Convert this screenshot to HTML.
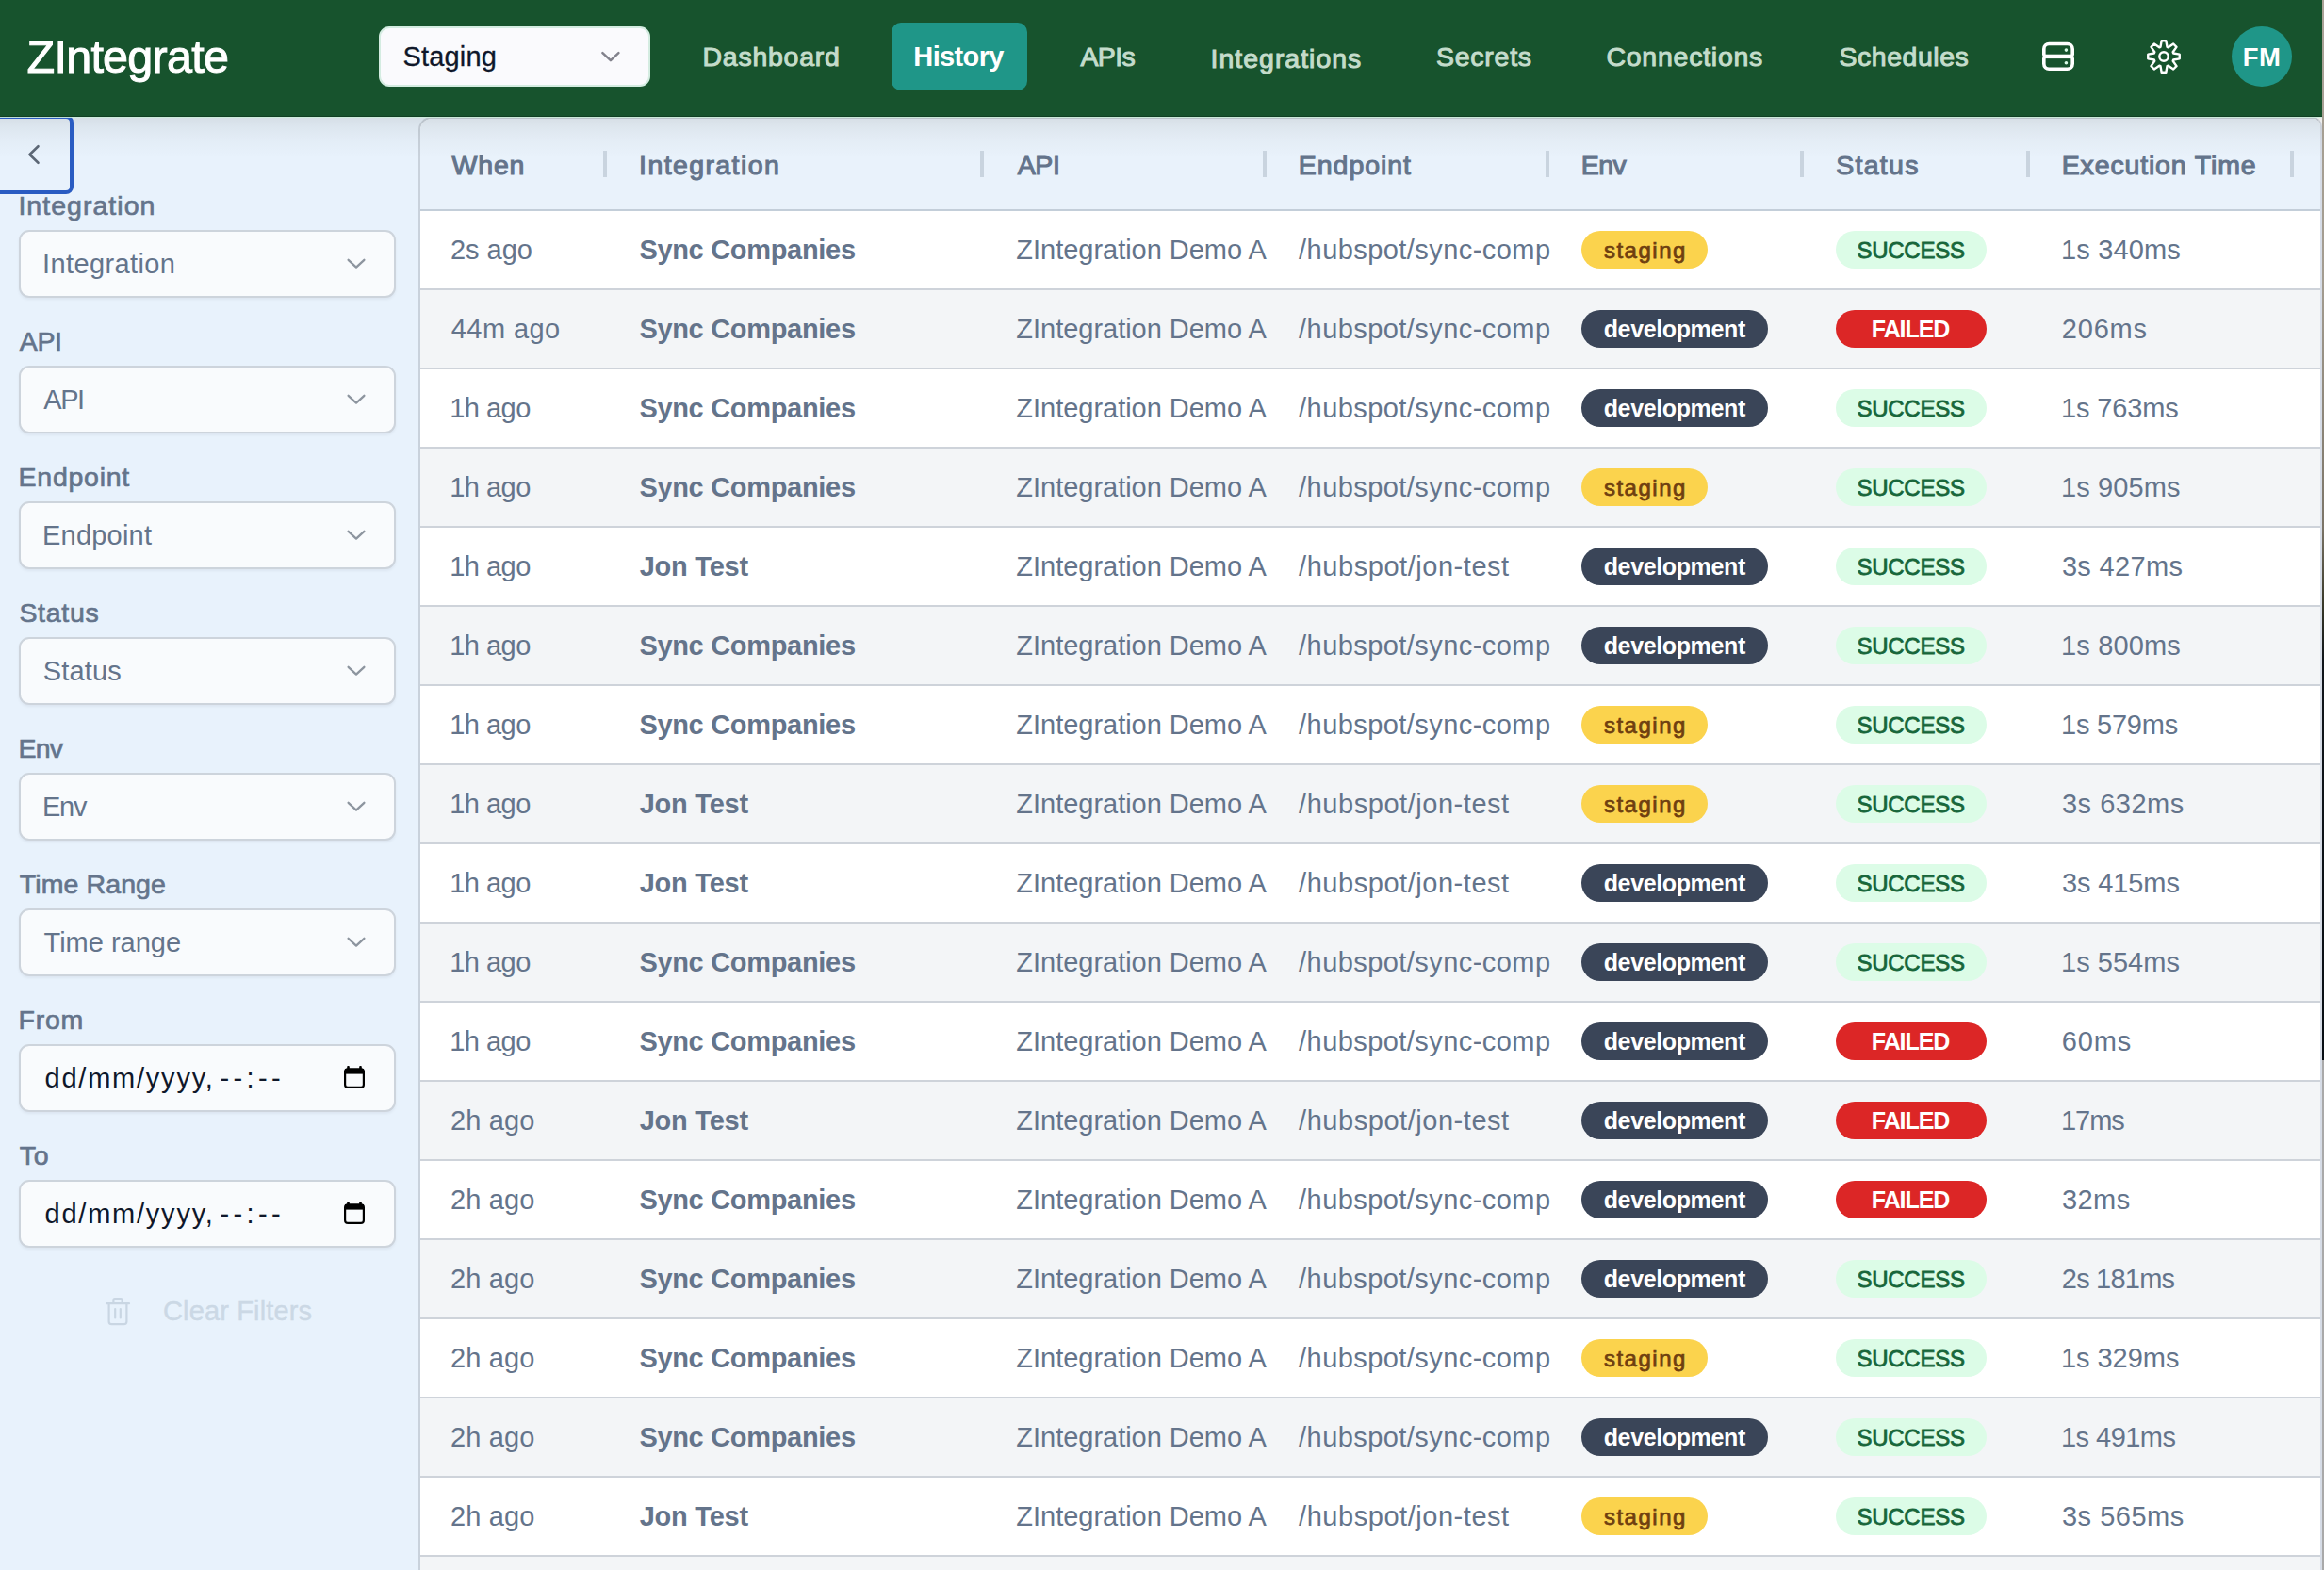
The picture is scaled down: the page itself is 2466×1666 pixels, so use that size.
<!DOCTYPE html>
<html lang="en"><head><meta charset="utf-8"><title>ZIntegrate - History</title><style>
html,body{margin:0;padding:0}
html{width:2466px;height:1666px;overflow:hidden}
body{width:2466px;height:1666px;overflow:hidden;background:#fff;position:relative;font-family:"Liberation Sans", sans-serif}
.a{position:absolute;display:block}
.t{position:absolute;white-space:nowrap;line-height:1;font-weight:400;font-family:"Liberation Sans", sans-serif}
</style></head><body>
<div class="a " style="left:0px;top:124px;width:470px;height:1542px;background:#e8f2fc;"></div>
<main>
<div class="a" style="left:444px;top:124px;width:2020px;height:1542px;border:2px solid #c9d2dc;border-right-color:#d6dce6;border-bottom:0;border-radius:14px 10px 0 0;box-sizing:border-box;overflow:hidden;background:#fff">
<div class="a" style="left:0;top:0;width:2020px;height:96px;background:#e9f2fb;border-bottom:2px solid #c3ced9"></div>
<div class="a" style="left:0;top:98px;width:2020px;height:82px;background:#fff;border-bottom:2px solid #ced3da"></div>
<div class="a" style="left:0;top:182px;width:2020px;height:82px;background:#f3f5f7;border-bottom:2px solid #ced3da"></div>
<div class="a" style="left:0;top:266px;width:2020px;height:82px;background:#fff;border-bottom:2px solid #ced3da"></div>
<div class="a" style="left:0;top:350px;width:2020px;height:82px;background:#f3f5f7;border-bottom:2px solid #ced3da"></div>
<div class="a" style="left:0;top:434px;width:2020px;height:82px;background:#fff;border-bottom:2px solid #ced3da"></div>
<div class="a" style="left:0;top:518px;width:2020px;height:82px;background:#f3f5f7;border-bottom:2px solid #ced3da"></div>
<div class="a" style="left:0;top:602px;width:2020px;height:82px;background:#fff;border-bottom:2px solid #ced3da"></div>
<div class="a" style="left:0;top:686px;width:2020px;height:82px;background:#f3f5f7;border-bottom:2px solid #ced3da"></div>
<div class="a" style="left:0;top:770px;width:2020px;height:82px;background:#fff;border-bottom:2px solid #ced3da"></div>
<div class="a" style="left:0;top:854px;width:2020px;height:82px;background:#f3f5f7;border-bottom:2px solid #ced3da"></div>
<div class="a" style="left:0;top:938px;width:2020px;height:82px;background:#fff;border-bottom:2px solid #ced3da"></div>
<div class="a" style="left:0;top:1022px;width:2020px;height:82px;background:#f3f5f7;border-bottom:2px solid #ced3da"></div>
<div class="a" style="left:0;top:1106px;width:2020px;height:82px;background:#fff;border-bottom:2px solid #ced3da"></div>
<div class="a" style="left:0;top:1190px;width:2020px;height:82px;background:#f3f5f7;border-bottom:2px solid #ced3da"></div>
<div class="a" style="left:0;top:1274px;width:2020px;height:82px;background:#fff;border-bottom:2px solid #ced3da"></div>
<div class="a" style="left:0;top:1358px;width:2020px;height:82px;background:#f3f5f7;border-bottom:2px solid #ced3da"></div>
<div class="a" style="left:0;top:1442px;width:2020px;height:82px;background:#fff;border-bottom:2px solid #ced3da"></div>
<div class="a" style="left:0;top:1526px;width:2020px;height:82px;background:#f3f5f7;border-bottom:2px solid #ced3da"></div>
</div>
<div class="a " style="left:0px;top:124px;width:2464px;height:44px;background:linear-gradient(to bottom,rgba(15,15,0,.088),rgba(15,15,0,.05) 25%,rgba(15,15,0,.022) 55%,rgba(15,15,0,0));pointer-events:none;"></div>
<div class="a " style="left:640px;top:160px;width:4px;height:28px;background:#c9d4df;"></div>
<div class="a " style="left:1040px;top:160px;width:4px;height:28px;background:#c9d4df;"></div>
<div class="a " style="left:1340px;top:160px;width:4px;height:28px;background:#c9d4df;"></div>
<div class="a " style="left:1640px;top:160px;width:4px;height:28px;background:#c9d4df;"></div>
<div class="a " style="left:1910px;top:160px;width:4px;height:28px;background:#c9d4df;"></div>
<div class="a " style="left:2150px;top:160px;width:4px;height:28px;background:#c9d4df;"></div>
<div class="a " style="left:2430px;top:160px;width:4px;height:28px;background:#c9d4df;"></div>
<span class="t" style="left:479.53px;top:161px;font-size:28.5px;color:#64748b;letter-spacing:0.820px;-webkit-text-stroke:1.1px #64748b;">When</span>
<span class="t" style="left:678.09px;top:161px;font-size:28.5px;color:#64748b;letter-spacing:1.399px;-webkit-text-stroke:1.1px #64748b;">Integration</span>
<span class="t" style="left:1079.65px;top:161px;font-size:28.5px;color:#64748b;letter-spacing:-0.377px;-webkit-text-stroke:1.1px #64748b;">API</span>
<span class="t" style="left:1377.84px;top:161px;font-size:28.5px;color:#64748b;letter-spacing:0.957px;-webkit-text-stroke:1.1px #64748b;">Endpoint</span>
<span class="t" style="left:1677.84px;top:161px;font-size:28.5px;color:#64748b;letter-spacing:-0.589px;-webkit-text-stroke:1.1px #64748b;">Env</span>
<span class="t" style="left:1948.24px;top:161px;font-size:28.5px;color:#64748b;letter-spacing:1.283px;-webkit-text-stroke:1.1px #64748b;">Status</span>
<span class="t" style="left:2187.74px;top:161px;font-size:28.5px;color:#64748b;letter-spacing:0.846px;-webkit-text-stroke:1.1px #64748b;">Execution Time</span>
<span class="t" style="left:478.00px;top:251px;font-size:29.0px;color:#64748b;letter-spacing:-0.023px;">2s ago</span>
<span class="t" style="left:678.38px;top:251px;font-size:29.0px;color:#64748b;font-weight:700;letter-spacing:-0.312px;">Sync Companies</span>
<span class="t" style="left:1078.35px;top:251px;font-size:29.0px;color:#64748b;letter-spacing:-0.025px;">ZIntegration Demo A</span>
<span class="t" style="left:1378.07px;top:251px;font-size:29.0px;color:#64748b;letter-spacing:0.439px;">/hubspot/sync-comp</span>
<div class="a " style="left:1678px;top:245px;width:134px;height:40px;background:#fbd34d;border-radius:20px;"></div>
<span class="t" style="left:1701.89px;top:254px;font-size:24.0px;color:#6f3f10;letter-spacing:1.533px;-webkit-text-stroke:0.75px #6f3f10;">staging</span>
<div class="a " style="left:1948px;top:245px;width:160px;height:40px;background:#dcfce7;border-radius:20px;"></div>
<span class="t" style="left:1970.48px;top:254px;font-size:24.0px;color:#17663a;letter-spacing:-0.265px;-webkit-text-stroke:0.8px #17663a;">SUCCESS</span>
<span class="t" style="left:2187.01px;top:251px;font-size:29.0px;color:#64748b;letter-spacing:0.151px;">1s 340ms</span>
<span class="t" style="left:478.82px;top:335px;font-size:29.0px;color:#64748b;letter-spacing:0.415px;">44m ago</span>
<span class="t" style="left:678.38px;top:335px;font-size:29.0px;color:#64748b;font-weight:700;letter-spacing:-0.312px;">Sync Companies</span>
<span class="t" style="left:1078.35px;top:335px;font-size:29.0px;color:#64748b;letter-spacing:-0.025px;">ZIntegration Demo A</span>
<span class="t" style="left:1378.07px;top:335px;font-size:29.0px;color:#64748b;letter-spacing:0.439px;">/hubspot/sync-comp</span>
<div class="a " style="left:1678px;top:329px;width:198px;height:40px;background:#3a4558;border-radius:20px;"></div>
<span class="t" style="left:1701.69px;top:337px;font-size:25.0px;color:#ffffff;font-weight:700;letter-spacing:-0.366px;">development</span>
<div class="a " style="left:1948px;top:329px;width:160px;height:40px;background:#dc2626;border-radius:20px;"></div>
<span class="t" style="left:1985.82px;top:337px;font-size:25.0px;color:#ffffff;font-weight:700;letter-spacing:-1.075px;">FAILED</span>
<span class="t" style="left:2187.80px;top:335px;font-size:29.0px;color:#64748b;letter-spacing:0.789px;">206ms</span>
<span class="t" style="left:477.21px;top:419px;font-size:29.0px;color:#64748b;letter-spacing:-0.514px;">1h ago</span>
<span class="t" style="left:678.38px;top:419px;font-size:29.0px;color:#64748b;font-weight:700;letter-spacing:-0.312px;">Sync Companies</span>
<span class="t" style="left:1078.35px;top:419px;font-size:29.0px;color:#64748b;letter-spacing:-0.025px;">ZIntegration Demo A</span>
<span class="t" style="left:1378.07px;top:419px;font-size:29.0px;color:#64748b;letter-spacing:0.439px;">/hubspot/sync-comp</span>
<div class="a " style="left:1678px;top:413px;width:198px;height:40px;background:#3a4558;border-radius:20px;"></div>
<span class="t" style="left:1701.69px;top:421px;font-size:25.0px;color:#ffffff;font-weight:700;letter-spacing:-0.366px;">development</span>
<div class="a " style="left:1948px;top:413px;width:160px;height:40px;background:#dcfce7;border-radius:20px;"></div>
<span class="t" style="left:1970.48px;top:422px;font-size:24.0px;color:#17663a;letter-spacing:-0.265px;-webkit-text-stroke:0.8px #17663a;">SUCCESS</span>
<span class="t" style="left:2187.01px;top:419px;font-size:29.0px;color:#64748b;letter-spacing:-0.149px;">1s 763ms</span>
<span class="t" style="left:477.21px;top:503px;font-size:29.0px;color:#64748b;letter-spacing:-0.514px;">1h ago</span>
<span class="t" style="left:678.38px;top:503px;font-size:29.0px;color:#64748b;font-weight:700;letter-spacing:-0.312px;">Sync Companies</span>
<span class="t" style="left:1078.35px;top:503px;font-size:29.0px;color:#64748b;letter-spacing:-0.025px;">ZIntegration Demo A</span>
<span class="t" style="left:1378.07px;top:503px;font-size:29.0px;color:#64748b;letter-spacing:0.439px;">/hubspot/sync-comp</span>
<div class="a " style="left:1678px;top:497px;width:134px;height:40px;background:#fbd34d;border-radius:20px;"></div>
<span class="t" style="left:1701.89px;top:506px;font-size:24.0px;color:#6f3f10;letter-spacing:1.533px;-webkit-text-stroke:0.75px #6f3f10;">staging</span>
<div class="a " style="left:1948px;top:497px;width:160px;height:40px;background:#dcfce7;border-radius:20px;"></div>
<span class="t" style="left:1970.48px;top:506px;font-size:24.0px;color:#17663a;letter-spacing:-0.265px;-webkit-text-stroke:0.8px #17663a;">SUCCESS</span>
<span class="t" style="left:2187.01px;top:503px;font-size:29.0px;color:#64748b;letter-spacing:0.094px;">1s 905ms</span>
<span class="t" style="left:477.21px;top:587px;font-size:29.0px;color:#64748b;letter-spacing:-0.514px;">1h ago</span>
<span class="t" style="left:678.64px;top:587px;font-size:29.0px;color:#64748b;font-weight:700;letter-spacing:-0.231px;">Jon Test</span>
<span class="t" style="left:1078.35px;top:587px;font-size:29.0px;color:#64748b;letter-spacing:-0.025px;">ZIntegration Demo A</span>
<span class="t" style="left:1378.07px;top:587px;font-size:29.0px;color:#64748b;letter-spacing:0.543px;">/hubspot/jon-test</span>
<div class="a " style="left:1678px;top:581px;width:198px;height:40px;background:#3a4558;border-radius:20px;"></div>
<span class="t" style="left:1701.69px;top:589px;font-size:25.0px;color:#ffffff;font-weight:700;letter-spacing:-0.366px;">development</span>
<div class="a " style="left:1948px;top:581px;width:160px;height:40px;background:#dcfce7;border-radius:20px;"></div>
<span class="t" style="left:1970.48px;top:590px;font-size:24.0px;color:#17663a;letter-spacing:-0.265px;-webkit-text-stroke:0.8px #17663a;">SUCCESS</span>
<span class="t" style="left:2187.89px;top:587px;font-size:29.0px;color:#64748b;letter-spacing:0.340px;">3s 427ms</span>
<span class="t" style="left:477.21px;top:671px;font-size:29.0px;color:#64748b;letter-spacing:-0.514px;">1h ago</span>
<span class="t" style="left:678.38px;top:671px;font-size:29.0px;color:#64748b;font-weight:700;letter-spacing:-0.312px;">Sync Companies</span>
<span class="t" style="left:1078.35px;top:671px;font-size:29.0px;color:#64748b;letter-spacing:-0.025px;">ZIntegration Demo A</span>
<span class="t" style="left:1378.07px;top:671px;font-size:29.0px;color:#64748b;letter-spacing:0.439px;">/hubspot/sync-comp</span>
<div class="a " style="left:1678px;top:665px;width:198px;height:40px;background:#3a4558;border-radius:20px;"></div>
<span class="t" style="left:1701.69px;top:673px;font-size:25.0px;color:#ffffff;font-weight:700;letter-spacing:-0.366px;">development</span>
<div class="a " style="left:1948px;top:665px;width:160px;height:40px;background:#dcfce7;border-radius:20px;"></div>
<span class="t" style="left:1970.48px;top:674px;font-size:24.0px;color:#17663a;letter-spacing:-0.265px;-webkit-text-stroke:0.8px #17663a;">SUCCESS</span>
<span class="t" style="left:2187.01px;top:671px;font-size:29.0px;color:#64748b;letter-spacing:0.151px;">1s 800ms</span>
<span class="t" style="left:477.21px;top:755px;font-size:29.0px;color:#64748b;letter-spacing:-0.514px;">1h ago</span>
<span class="t" style="left:678.38px;top:755px;font-size:29.0px;color:#64748b;font-weight:700;letter-spacing:-0.312px;">Sync Companies</span>
<span class="t" style="left:1078.35px;top:755px;font-size:29.0px;color:#64748b;letter-spacing:-0.025px;">ZIntegration Demo A</span>
<span class="t" style="left:1378.07px;top:755px;font-size:29.0px;color:#64748b;letter-spacing:0.439px;">/hubspot/sync-comp</span>
<div class="a " style="left:1678px;top:749px;width:134px;height:40px;background:#fbd34d;border-radius:20px;"></div>
<span class="t" style="left:1701.89px;top:758px;font-size:24.0px;color:#6f3f10;letter-spacing:1.533px;-webkit-text-stroke:0.75px #6f3f10;">staging</span>
<div class="a " style="left:1948px;top:749px;width:160px;height:40px;background:#dcfce7;border-radius:20px;"></div>
<span class="t" style="left:1970.48px;top:758px;font-size:24.0px;color:#17663a;letter-spacing:-0.265px;-webkit-text-stroke:0.8px #17663a;">SUCCESS</span>
<span class="t" style="left:2187.01px;top:755px;font-size:29.0px;color:#64748b;letter-spacing:-0.220px;">1s 579ms</span>
<span class="t" style="left:477.21px;top:839px;font-size:29.0px;color:#64748b;letter-spacing:-0.514px;">1h ago</span>
<span class="t" style="left:678.64px;top:839px;font-size:29.0px;color:#64748b;font-weight:700;letter-spacing:-0.231px;">Jon Test</span>
<span class="t" style="left:1078.35px;top:839px;font-size:29.0px;color:#64748b;letter-spacing:-0.025px;">ZIntegration Demo A</span>
<span class="t" style="left:1378.07px;top:839px;font-size:29.0px;color:#64748b;letter-spacing:0.543px;">/hubspot/jon-test</span>
<div class="a " style="left:1678px;top:833px;width:134px;height:40px;background:#fbd34d;border-radius:20px;"></div>
<span class="t" style="left:1701.89px;top:842px;font-size:24.0px;color:#6f3f10;letter-spacing:1.533px;-webkit-text-stroke:0.75px #6f3f10;">staging</span>
<div class="a " style="left:1948px;top:833px;width:160px;height:40px;background:#dcfce7;border-radius:20px;"></div>
<span class="t" style="left:1970.48px;top:842px;font-size:24.0px;color:#17663a;letter-spacing:-0.265px;-webkit-text-stroke:0.8px #17663a;">SUCCESS</span>
<span class="t" style="left:2187.89px;top:839px;font-size:29.0px;color:#64748b;letter-spacing:0.525px;">3s 632ms</span>
<span class="t" style="left:477.21px;top:923px;font-size:29.0px;color:#64748b;letter-spacing:-0.514px;">1h ago</span>
<span class="t" style="left:678.64px;top:923px;font-size:29.0px;color:#64748b;font-weight:700;letter-spacing:-0.231px;">Jon Test</span>
<span class="t" style="left:1078.35px;top:923px;font-size:29.0px;color:#64748b;letter-spacing:-0.025px;">ZIntegration Demo A</span>
<span class="t" style="left:1378.07px;top:923px;font-size:29.0px;color:#64748b;letter-spacing:0.543px;">/hubspot/jon-test</span>
<div class="a " style="left:1678px;top:917px;width:198px;height:40px;background:#3a4558;border-radius:20px;"></div>
<span class="t" style="left:1701.69px;top:925px;font-size:25.0px;color:#ffffff;font-weight:700;letter-spacing:-0.366px;">development</span>
<div class="a " style="left:1948px;top:917px;width:160px;height:40px;background:#dcfce7;border-radius:20px;"></div>
<span class="t" style="left:1970.48px;top:926px;font-size:24.0px;color:#17663a;letter-spacing:-0.265px;-webkit-text-stroke:0.8px #17663a;">SUCCESS</span>
<span class="t" style="left:2187.89px;top:923px;font-size:29.0px;color:#64748b;letter-spacing:-0.103px;">3s 415ms</span>
<span class="t" style="left:477.21px;top:1007px;font-size:29.0px;color:#64748b;letter-spacing:-0.514px;">1h ago</span>
<span class="t" style="left:678.38px;top:1007px;font-size:29.0px;color:#64748b;font-weight:700;letter-spacing:-0.312px;">Sync Companies</span>
<span class="t" style="left:1078.35px;top:1007px;font-size:29.0px;color:#64748b;letter-spacing:-0.025px;">ZIntegration Demo A</span>
<span class="t" style="left:1378.07px;top:1007px;font-size:29.0px;color:#64748b;letter-spacing:0.439px;">/hubspot/sync-comp</span>
<div class="a " style="left:1678px;top:1001px;width:198px;height:40px;background:#3a4558;border-radius:20px;"></div>
<span class="t" style="left:1701.69px;top:1009px;font-size:25.0px;color:#ffffff;font-weight:700;letter-spacing:-0.366px;">development</span>
<div class="a " style="left:1948px;top:1001px;width:160px;height:40px;background:#dcfce7;border-radius:20px;"></div>
<span class="t" style="left:1970.48px;top:1010px;font-size:24.0px;color:#17663a;letter-spacing:-0.265px;-webkit-text-stroke:0.8px #17663a;">SUCCESS</span>
<span class="t" style="left:2187.01px;top:1007px;font-size:29.0px;color:#64748b;letter-spacing:0.022px;">1s 554ms</span>
<span class="t" style="left:477.21px;top:1091px;font-size:29.0px;color:#64748b;letter-spacing:-0.514px;">1h ago</span>
<span class="t" style="left:678.38px;top:1091px;font-size:29.0px;color:#64748b;font-weight:700;letter-spacing:-0.312px;">Sync Companies</span>
<span class="t" style="left:1078.35px;top:1091px;font-size:29.0px;color:#64748b;letter-spacing:-0.025px;">ZIntegration Demo A</span>
<span class="t" style="left:1378.07px;top:1091px;font-size:29.0px;color:#64748b;letter-spacing:0.439px;">/hubspot/sync-comp</span>
<div class="a " style="left:1678px;top:1085px;width:198px;height:40px;background:#3a4558;border-radius:20px;"></div>
<span class="t" style="left:1701.69px;top:1093px;font-size:25.0px;color:#ffffff;font-weight:700;letter-spacing:-0.366px;">development</span>
<div class="a " style="left:1948px;top:1085px;width:160px;height:40px;background:#dc2626;border-radius:20px;"></div>
<span class="t" style="left:1985.82px;top:1093px;font-size:25.0px;color:#ffffff;font-weight:700;letter-spacing:-1.075px;">FAILED</span>
<span class="t" style="left:2187.79px;top:1091px;font-size:29.0px;color:#64748b;letter-spacing:0.822px;">60ms</span>
<span class="t" style="left:478.00px;top:1175px;font-size:29.0px;color:#64748b;letter-spacing:0.129px;">2h ago</span>
<span class="t" style="left:678.64px;top:1175px;font-size:29.0px;color:#64748b;font-weight:700;letter-spacing:-0.231px;">Jon Test</span>
<span class="t" style="left:1078.35px;top:1175px;font-size:29.0px;color:#64748b;letter-spacing:-0.025px;">ZIntegration Demo A</span>
<span class="t" style="left:1378.07px;top:1175px;font-size:29.0px;color:#64748b;letter-spacing:0.543px;">/hubspot/jon-test</span>
<div class="a " style="left:1678px;top:1169px;width:198px;height:40px;background:#3a4558;border-radius:20px;"></div>
<span class="t" style="left:1701.69px;top:1177px;font-size:25.0px;color:#ffffff;font-weight:700;letter-spacing:-0.366px;">development</span>
<div class="a " style="left:1948px;top:1169px;width:160px;height:40px;background:#dc2626;border-radius:20px;"></div>
<span class="t" style="left:1985.82px;top:1177px;font-size:25.0px;color:#ffffff;font-weight:700;letter-spacing:-1.075px;">FAILED</span>
<span class="t" style="left:2187.01px;top:1175px;font-size:29.0px;color:#64748b;letter-spacing:-1.052px;">17ms</span>
<span class="t" style="left:478.00px;top:1259px;font-size:29.0px;color:#64748b;letter-spacing:0.129px;">2h ago</span>
<span class="t" style="left:678.38px;top:1259px;font-size:29.0px;color:#64748b;font-weight:700;letter-spacing:-0.312px;">Sync Companies</span>
<span class="t" style="left:1078.35px;top:1259px;font-size:29.0px;color:#64748b;letter-spacing:-0.025px;">ZIntegration Demo A</span>
<span class="t" style="left:1378.07px;top:1259px;font-size:29.0px;color:#64748b;letter-spacing:0.439px;">/hubspot/sync-comp</span>
<div class="a " style="left:1678px;top:1253px;width:198px;height:40px;background:#3a4558;border-radius:20px;"></div>
<span class="t" style="left:1701.69px;top:1261px;font-size:25.0px;color:#ffffff;font-weight:700;letter-spacing:-0.366px;">development</span>
<div class="a " style="left:1948px;top:1253px;width:160px;height:40px;background:#dc2626;border-radius:20px;"></div>
<span class="t" style="left:1985.82px;top:1261px;font-size:25.0px;color:#ffffff;font-weight:700;letter-spacing:-1.075px;">FAILED</span>
<span class="t" style="left:2187.89px;top:1259px;font-size:29.0px;color:#64748b;letter-spacing:0.456px;">32ms</span>
<span class="t" style="left:478.00px;top:1343px;font-size:29.0px;color:#64748b;letter-spacing:0.129px;">2h ago</span>
<span class="t" style="left:678.38px;top:1343px;font-size:29.0px;color:#64748b;font-weight:700;letter-spacing:-0.312px;">Sync Companies</span>
<span class="t" style="left:1078.35px;top:1343px;font-size:29.0px;color:#64748b;letter-spacing:-0.025px;">ZIntegration Demo A</span>
<span class="t" style="left:1378.07px;top:1343px;font-size:29.0px;color:#64748b;letter-spacing:0.439px;">/hubspot/sync-comp</span>
<div class="a " style="left:1678px;top:1337px;width:198px;height:40px;background:#3a4558;border-radius:20px;"></div>
<span class="t" style="left:1701.69px;top:1345px;font-size:25.0px;color:#ffffff;font-weight:700;letter-spacing:-0.366px;">development</span>
<div class="a " style="left:1948px;top:1337px;width:160px;height:40px;background:#dcfce7;border-radius:20px;"></div>
<span class="t" style="left:1970.48px;top:1346px;font-size:24.0px;color:#17663a;letter-spacing:-0.265px;-webkit-text-stroke:0.8px #17663a;">SUCCESS</span>
<span class="t" style="left:2187.80px;top:1343px;font-size:29.0px;color:#64748b;letter-spacing:-0.790px;">2s 181ms</span>
<span class="t" style="left:478.00px;top:1427px;font-size:29.0px;color:#64748b;letter-spacing:0.129px;">2h ago</span>
<span class="t" style="left:678.38px;top:1427px;font-size:29.0px;color:#64748b;font-weight:700;letter-spacing:-0.312px;">Sync Companies</span>
<span class="t" style="left:1078.35px;top:1427px;font-size:29.0px;color:#64748b;letter-spacing:-0.025px;">ZIntegration Demo A</span>
<span class="t" style="left:1378.07px;top:1427px;font-size:29.0px;color:#64748b;letter-spacing:0.439px;">/hubspot/sync-comp</span>
<div class="a " style="left:1678px;top:1421px;width:134px;height:40px;background:#fbd34d;border-radius:20px;"></div>
<span class="t" style="left:1701.89px;top:1430px;font-size:24.0px;color:#6f3f10;letter-spacing:1.533px;-webkit-text-stroke:0.75px #6f3f10;">staging</span>
<div class="a " style="left:1948px;top:1421px;width:160px;height:40px;background:#dcfce7;border-radius:20px;"></div>
<span class="t" style="left:1970.48px;top:1430px;font-size:24.0px;color:#17663a;letter-spacing:-0.265px;-webkit-text-stroke:0.8px #17663a;">SUCCESS</span>
<span class="t" style="left:2187.01px;top:1427px;font-size:29.0px;color:#64748b;letter-spacing:-0.049px;">1s 329ms</span>
<span class="t" style="left:478.00px;top:1511px;font-size:29.0px;color:#64748b;letter-spacing:0.129px;">2h ago</span>
<span class="t" style="left:678.38px;top:1511px;font-size:29.0px;color:#64748b;font-weight:700;letter-spacing:-0.312px;">Sync Companies</span>
<span class="t" style="left:1078.35px;top:1511px;font-size:29.0px;color:#64748b;letter-spacing:-0.025px;">ZIntegration Demo A</span>
<span class="t" style="left:1378.07px;top:1511px;font-size:29.0px;color:#64748b;letter-spacing:0.439px;">/hubspot/sync-comp</span>
<div class="a " style="left:1678px;top:1505px;width:198px;height:40px;background:#3a4558;border-radius:20px;"></div>
<span class="t" style="left:1701.69px;top:1513px;font-size:25.0px;color:#ffffff;font-weight:700;letter-spacing:-0.366px;">development</span>
<div class="a " style="left:1948px;top:1505px;width:160px;height:40px;background:#dcfce7;border-radius:20px;"></div>
<span class="t" style="left:1970.48px;top:1514px;font-size:24.0px;color:#17663a;letter-spacing:-0.265px;-webkit-text-stroke:0.8px #17663a;">SUCCESS</span>
<span class="t" style="left:2187.01px;top:1511px;font-size:29.0px;color:#64748b;letter-spacing:-0.535px;">1s 491ms</span>
<span class="t" style="left:478.00px;top:1595px;font-size:29.0px;color:#64748b;letter-spacing:0.129px;">2h ago</span>
<span class="t" style="left:678.64px;top:1595px;font-size:29.0px;color:#64748b;font-weight:700;letter-spacing:-0.231px;">Jon Test</span>
<span class="t" style="left:1078.35px;top:1595px;font-size:29.0px;color:#64748b;letter-spacing:-0.025px;">ZIntegration Demo A</span>
<span class="t" style="left:1378.07px;top:1595px;font-size:29.0px;color:#64748b;letter-spacing:0.543px;">/hubspot/jon-test</span>
<div class="a " style="left:1678px;top:1589px;width:134px;height:40px;background:#fbd34d;border-radius:20px;"></div>
<span class="t" style="left:1701.89px;top:1598px;font-size:24.0px;color:#6f3f10;letter-spacing:1.533px;-webkit-text-stroke:0.75px #6f3f10;">staging</span>
<div class="a " style="left:1948px;top:1589px;width:160px;height:40px;background:#dcfce7;border-radius:20px;"></div>
<span class="t" style="left:1970.48px;top:1598px;font-size:24.0px;color:#17663a;letter-spacing:-0.265px;-webkit-text-stroke:0.8px #17663a;">SUCCESS</span>
<span class="t" style="left:2187.89px;top:1595px;font-size:29.0px;color:#64748b;letter-spacing:0.525px;">3s 565ms</span>
</main>
<aside>
<div class="a " style="left:-20px;top:122px;width:98px;height:84px;border:4px solid #2a5cc2;border-radius:8px;box-sizing:border-box;"></div>
<svg class="a" style="left:26px;top:150px" width="20" height="28" viewBox="0 0 20 28"><path d="M14.5 5.2 L5.5 14 L14.5 22.8" fill="none" stroke="#5c6775" stroke-width="2.6" stroke-linecap="round" stroke-linejoin="round"/></svg>
<span class="t lab" style="left:19.39px;top:204px;font-size:28.5px;color:#64748b;letter-spacing:1.035px;-webkit-text-stroke:0.7px #64748b;">Integration</span>
<div class="a " style="left:20px;top:244px;width:400px;height:72px;background:#f9fbfd;border:2px solid #cdd4dc;border-radius:11px;box-sizing:border-box;box-shadow:0 2px 3px rgba(16,24,40,.05);"></div>
<span class="t" style="left:45.02px;top:266px;font-size:29.0px;color:#64748b;letter-spacing:0.392px;">Integration</span>
<svg class="a" style="left:366px;top:272px" width="24" height="16" viewBox="0 0 24 16"><path d="M3.6 3.8 L12 11.6 L20.4 3.8" fill="none" stroke="#8d959f" stroke-width="2.3" stroke-linecap="round" stroke-linejoin="round"/></svg>
<span class="t lab" style="left:20.73px;top:348px;font-size:28.5px;color:#64748b;letter-spacing:-0.323px;-webkit-text-stroke:0.7px #64748b;">API</span>
<div class="a " style="left:20px;top:388px;width:400px;height:72px;background:#f9fbfd;border:2px solid #cdd4dc;border-radius:11px;box-sizing:border-box;box-shadow:0 2px 3px rgba(16,24,40,.05);"></div>
<span class="t" style="left:46.35px;top:410px;font-size:29.0px;color:#64748b;letter-spacing:-1.553px;">API</span>
<svg class="a" style="left:366px;top:416px" width="24" height="16" viewBox="0 0 24 16"><path d="M3.6 3.8 L12 11.6 L20.4 3.8" fill="none" stroke="#8d959f" stroke-width="2.3" stroke-linecap="round" stroke-linejoin="round"/></svg>
<span class="t lab" style="left:19.62px;top:492px;font-size:28.5px;color:#64748b;letter-spacing:0.729px;-webkit-text-stroke:0.7px #64748b;">Endpoint</span>
<div class="a " style="left:20px;top:532px;width:400px;height:72px;background:#f9fbfd;border:2px solid #cdd4dc;border-radius:11px;box-sizing:border-box;box-shadow:0 2px 3px rgba(16,24,40,.05);"></div>
<span class="t" style="left:45.08px;top:554px;font-size:29.0px;color:#64748b;letter-spacing:0.196px;">Endpoint</span>
<svg class="a" style="left:366px;top:560px" width="24" height="16" viewBox="0 0 24 16"><path d="M3.6 3.8 L12 11.6 L20.4 3.8" fill="none" stroke="#8d959f" stroke-width="2.3" stroke-linecap="round" stroke-linejoin="round"/></svg>
<span class="t lab" style="left:20.39px;top:636px;font-size:28.5px;color:#64748b;letter-spacing:0.740px;-webkit-text-stroke:0.7px #64748b;">Status</span>
<div class="a " style="left:20px;top:676px;width:400px;height:72px;background:#f9fbfd;border:2px solid #cdd4dc;border-radius:11px;box-sizing:border-box;box-shadow:0 2px 3px rgba(16,24,40,.05);"></div>
<span class="t" style="left:45.80px;top:698px;font-size:29.0px;color:#64748b;letter-spacing:0.161px;">Status</span>
<svg class="a" style="left:366px;top:704px" width="24" height="16" viewBox="0 0 24 16"><path d="M3.6 3.8 L12 11.6 L20.4 3.8" fill="none" stroke="#8d959f" stroke-width="2.3" stroke-linecap="round" stroke-linejoin="round"/></svg>
<span class="t lab" style="left:19.62px;top:780px;font-size:28.5px;color:#64748b;letter-spacing:-0.904px;-webkit-text-stroke:0.7px #64748b;">Env</span>
<div class="a " style="left:20px;top:820px;width:400px;height:72px;background:#f9fbfd;border:2px solid #cdd4dc;border-radius:11px;box-sizing:border-box;box-shadow:0 2px 3px rgba(16,24,40,.05);"></div>
<span class="t" style="left:45.08px;top:842px;font-size:29.0px;color:#64748b;letter-spacing:-1.325px;">Env</span>
<svg class="a" style="left:366px;top:848px" width="24" height="16" viewBox="0 0 24 16"><path d="M3.6 3.8 L12 11.6 L20.4 3.8" fill="none" stroke="#8d959f" stroke-width="2.3" stroke-linecap="round" stroke-linejoin="round"/></svg>
<span class="t lab" style="left:20.79px;top:924px;font-size:28.5px;color:#64748b;letter-spacing:0.108px;-webkit-text-stroke:0.7px #64748b;">Time Range</span>
<div class="a " style="left:20px;top:964px;width:400px;height:72px;background:#f9fbfd;border:2px solid #cdd4dc;border-radius:11px;box-sizing:border-box;box-shadow:0 2px 3px rgba(16,24,40,.05);"></div>
<span class="t" style="left:46.54px;top:986px;font-size:29.0px;color:#64748b;">Time range</span>
<svg class="a" style="left:366px;top:992px" width="24" height="16" viewBox="0 0 24 16"><path d="M3.6 3.8 L12 11.6 L20.4 3.8" fill="none" stroke="#8d959f" stroke-width="2.3" stroke-linecap="round" stroke-linejoin="round"/></svg>
<span class="t lab" style="left:19.62px;top:1068px;font-size:28.5px;color:#64748b;letter-spacing:0.738px;-webkit-text-stroke:0.7px #64748b;">From</span>
<div class="a " style="left:20px;top:1108px;width:400px;height:72px;background:#f9fbfd;border:2px solid #cdd4dc;border-radius:11px;box-sizing:border-box;box-shadow:0 2px 3px rgba(16,24,40,.05);"></div>
<span class="t" style="left:47.50px;top:1130px;font-size:29.0px;color:#0f172a;letter-spacing:1.775px;">dd/mm/yyyy,</span>
<span class="t" style="left:233.55px;top:1130px;font-size:29.0px;color:#0f172a;letter-spacing:4.349px;">--:--</span>
<svg class="a" style="left:364px;top:1130.8px" width="24" height="26" viewBox="0 0 24 26"><rect x="2.1" y="3.3" width="19.8" height="19.6" rx="3" ry="3" fill="none" stroke="#000" stroke-width="2.2"/><rect x="2" y="3" width="20" height="5.6" fill="#000"/><rect x="4.2" y="0" width="2.6" height="4" rx="1" fill="#000"/><rect x="17.2" y="0" width="2.6" height="4" rx="1" fill="#000"/></svg>
<span class="t lab" style="left:20.79px;top:1212px;font-size:28.5px;color:#64748b;letter-spacing:0.733px;-webkit-text-stroke:0.7px #64748b;">To</span>
<div class="a " style="left:20px;top:1252px;width:400px;height:72px;background:#f9fbfd;border:2px solid #cdd4dc;border-radius:11px;box-sizing:border-box;box-shadow:0 2px 3px rgba(16,24,40,.05);"></div>
<span class="t" style="left:47.50px;top:1274px;font-size:29.0px;color:#0f172a;letter-spacing:1.775px;">dd/mm/yyyy,</span>
<span class="t" style="left:233.55px;top:1274px;font-size:29.0px;color:#0f172a;letter-spacing:4.349px;">--:--</span>
<svg class="a" style="left:364px;top:1274.8px" width="24" height="26" viewBox="0 0 24 26"><rect x="2.1" y="3.3" width="19.8" height="19.6" rx="3" ry="3" fill="none" stroke="#000" stroke-width="2.2"/><rect x="2" y="3" width="20" height="5.6" fill="#000"/><rect x="4.2" y="0" width="2.6" height="4" rx="1" fill="#000"/><rect x="17.2" y="0" width="2.6" height="4" rx="1" fill="#000"/></svg>
<svg class="a" style="left:110px;top:1375px" width="30" height="34" viewBox="0 0 30 34"><g fill="none" stroke="#c9d6e3" stroke-width="2.2" stroke-linecap="round" stroke-linejoin="round"><path d="M3 8.2 H27"/><path d="M10.4 8 V4.6 Q10.4 3.2 11.8 3.2 H18.2 Q19.6 3.2 19.6 4.6 V8"/><path d="M5.6 8.4 V27.2 Q5.6 30.2 8.6 30.2 H21.4 Q24.4 30.2 24.4 27.2 V8.4"/><path d="M12.2 14 V23.4"/><path d="M17.8 14 V23.4"/></g></svg>
<span class="t" style="left:172.95px;top:1377px;font-size:29.0px;color:#cbd8e5;letter-spacing:0.155px;-webkit-text-stroke:0.4px #cbd8e5;">Clear Filters</span>
</aside>
<header>
<div class="a " style="left:0px;top:0px;width:2464px;height:124px;background:#17532d;"></div>
<div class="a " style="left:0px;top:123px;width:2464px;height:1px;background:#113f24;"></div>
<div class="a " style="left:0px;top:124px;width:2464px;height:1px;background:rgba(205,238,220,.9);"></div>
<span class="t" style="left:28.57px;top:36px;font-size:48.5px;color:#ffffff;letter-spacing:-0.751px;-webkit-text-stroke:1.0px #ffffff;">ZIntegrate</span>
<div class="a " style="left:402px;top:28px;width:288px;height:64px;background:#fafafd;border:2px solid #d4ece1;box-sizing:border-box;border-radius:11px;"></div>
<span class="t" style="left:427.45px;top:46px;font-size:29.0px;color:#0f172a;letter-spacing:0.187px;-webkit-text-stroke:0.3px #0f172a;">Staging</span>
<svg class="a" style="left:636px;top:50px" width="24" height="20" viewBox="0 0 24 20"><path d="M3.4 6.1 L11.9 14.2 L20.4 6.1" fill="none" stroke="#82828c" stroke-width="2.5" stroke-linecap="round" stroke-linejoin="round"/></svg>
<span class="t" style="left:745.50px;top:46px;font-size:28.5px;color:#c4dccb;letter-spacing:0.741px;-webkit-text-stroke:1.0px #c4dccb;">Dashboard</span>
<div class="a " style="left:946px;top:24px;width:143.5px;height:72px;background:#1f9688;border-radius:10px;"></div>
<span class="t" style="left:969.35px;top:46px;font-size:29.0px;color:#ffffff;font-weight:700;letter-spacing:-0.627px;">History</span>
<span class="t" style="left:1146.51px;top:46px;font-size:28.5px;color:#c4dccb;letter-spacing:-0.654px;-webkit-text-stroke:1.0px #c4dccb;">APIs</span>
<span class="t" style="left:1284.57px;top:48px;font-size:28.5px;color:#c4dccb;letter-spacing:0.989px;-webkit-text-stroke:1.0px #c4dccb;">Integrations</span>
<span class="t" style="left:1524.01px;top:46px;font-size:28.5px;color:#c4dccb;letter-spacing:0.741px;-webkit-text-stroke:1.0px #c4dccb;">Secrets</span>
<span class="t" style="left:1704.42px;top:46px;font-size:28.5px;color:#c4dccb;letter-spacing:0.753px;-webkit-text-stroke:1.0px #c4dccb;">Connections</span>
<span class="t" style="left:1951.51px;top:46px;font-size:28.5px;color:#c4dccb;letter-spacing:0.530px;-webkit-text-stroke:1.0px #c4dccb;">Schedules</span>
<svg class="a" style="left:2164px;top:42px" width="40" height="36" viewBox="0 0 40 36"><g fill="none" stroke="#fff" stroke-width="3.6"><path d="M10.3 4.5 H29.7 A5.5 5.5 0 0 1 35.2 10 V15.4 A2.5 2.5 0 0 1 32.7 17.9 H7.3 A2.5 2.5 0 0 1 4.8 15.4 V10 A5.5 5.5 0 0 1 10.3 4.5 Z"/><path d="M7.3 17.9 H32.7 A2.5 2.5 0 0 1 35.2 20.4 V25.8 A5.5 5.5 0 0 1 29.7 31.3 H10.3 A5.5 5.5 0 0 1 4.8 25.8 V20.4 A2.5 2.5 0 0 1 7.3 17.9 Z"/></g><path d="M5 17.9 H35" stroke="#fff" stroke-width="4.4"/><circle cx="28.4" cy="11.1" r="1.8" fill="#d9fbe6"/><circle cx="28.4" cy="24.7" r="1.8" fill="#d9fbe6"/></svg>
<svg class="a" style="left:2276px;top:40px" width="40" height="40" viewBox="0 0 40 40"><g fill="none" stroke="#fff" stroke-width="2.4" stroke-linejoin="round"><path d="M16.48 9.79 L17.65 3.26 L22.35 3.26 L23.52 9.79 L24.73 10.29 L30.17 6.50 L33.50 9.83 L29.71 15.27 L30.21 16.48 L36.74 17.65 L36.74 22.35 L30.21 23.52 L29.71 24.73 L33.50 30.17 L30.17 33.50 L24.73 29.71 L23.52 30.21 L22.35 36.74 L17.65 36.74 L16.48 30.21 L15.27 29.71 L9.83 33.50 L6.50 30.17 L10.29 24.73 L9.79 23.52 L3.26 22.35 L3.26 17.65 L9.79 16.48 L10.29 15.27 L6.50 9.83 L9.83 6.50 L15.27 10.29 Z"/><circle cx="20" cy="20" r="4.7"/></g></svg>
<div class="a " style="left:2368px;top:28px;width:64px;height:64px;background:#1f9688;border-radius:50%;"></div>
<span class="t" style="left:2379.80px;top:47px;font-size:27.5px;color:#ffffff;font-weight:700;letter-spacing:0.525px;">FM</span>
</header>
<div class="a " style="left:2464px;top:0px;width:2px;height:1125px;background:linear-gradient(to bottom,#a9a296 0,#a39c90 300px,#7b7467 560px,#3a3a2a 640px,#10151a 700px,#070d13 1125px);"></div>
<div class="a " style="left:2464px;top:1125px;width:2px;height:541px;background:#a9a9a9;"></div>
<script>(function(){var w=window.innerWidth;if(w&&w<2300){document.body.style.zoom=(w/2466);}})();</script>
</body></html>
